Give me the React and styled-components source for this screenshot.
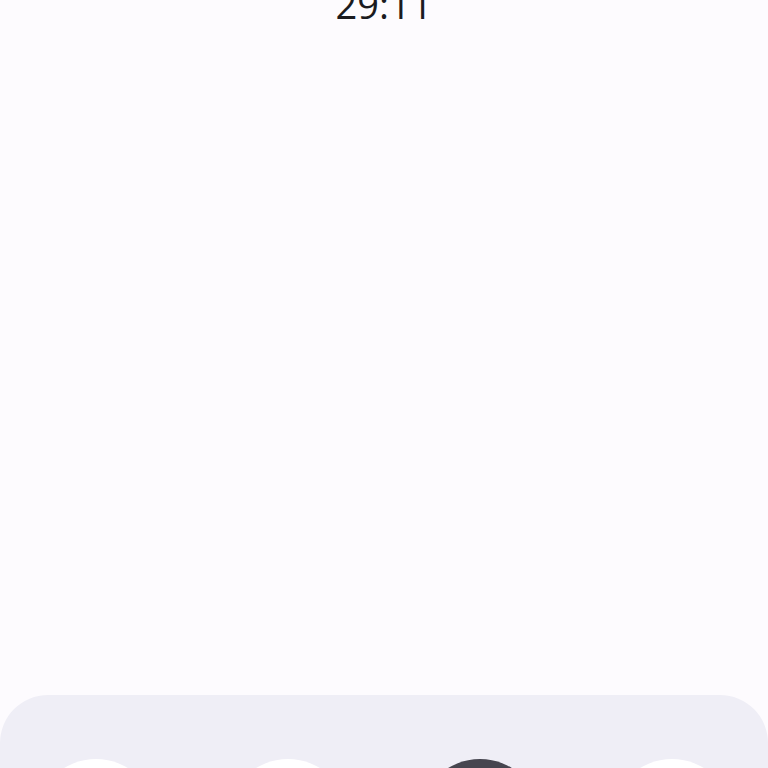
import React from 'react'
import styled, { createGlobalStyle } from 'styled-components'

const GlobalStyle = createGlobalStyle`
    html, body {
        margin: 0;
        padding: 0;
        background: #fdfbfe;
        overflow: hidden;
    }
`

const Screen = styled.div`
    height: 768px;
    width: 768px;
    display: flex;
    flex-direction: column;
    overflow: hidden;
    font-family: "Open Sans", "Liberation Sans", sans-serif;
`

const Timer = styled.div`
    margin-top: -20px;
    text-align: center;
    font-size: 38px;
    font-weight: 400;
    line-height: 48px;
    color: #1b1b1f;
`

const Spacer = styled.div`
    flex: 1;
`

const Panel = styled.div`
    flex: 0 0 auto;
    height: 160px;
    margin-bottom: -87px;
    background: #efeef6;
    border-radius: 48px 48px 0 0;
    padding-top: 64px;
    display: grid;
    grid-template-columns: repeat(4, 1fr);
    justify-items: center;
    align-items: start;
    box-sizing: border-box;
`

const Control = styled.button`
    width: 122px;
    height: 122px;
    border-radius: 50%;
    border: none;
    padding: 0;
    background: ${p => (p.$active ? '#46454f' : '#ffffff')};
`

const App = () => {
    return (
        <>
            <GlobalStyle />
            <Screen>
                <Timer>29:11</Timer>
                <Spacer />
                <Panel>
                    <Control />
                    <Control />
                    <Control $active />
                    <Control />
                </Panel>
            </Screen>
        </>
    )
}

export default App
